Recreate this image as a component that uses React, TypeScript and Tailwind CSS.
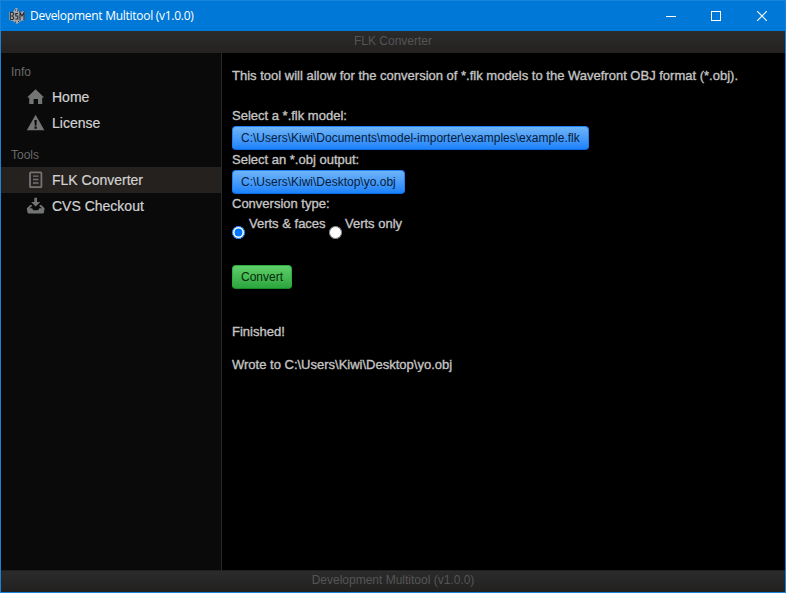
import React from "react";

type NavItem = { label: string; icon: React.ReactNode; active?: boolean };

const HomeIcon = () => (
  <svg viewBox="0 0 18 18" className="h-[18px] w-[18px]" fill="currentColor">
    <path d="M8.6 1.2 L17.2 9.6 H15.2 V16 H11 V11 H6.6 V16 H2.2 V9.6 H0 Z" />
  </svg>
);

const WarningIcon = () => (
  <svg viewBox="0 0 18 18" className="h-[18px] w-[18px]" fill="currentColor">
    <path fillRule="evenodd" d="M8.6 .8 L17.4 16.3 H-.2 Z M7.4 6 L7.8 11.8 H9.4 L9.8 6 Z M7.5 12.6 V14.7 H9.7 V12.6 Z" />
  </svg>
);

const DocumentIcon = () => (
  <svg viewBox="0 0 18 18" className="h-[18px] w-[18px]" fill="none" stroke="currentColor">
    <rect x="3" y="1.4" width="11.4" height="14.8" rx="0.8" strokeWidth="1.8" />
    <path d="M6 5.2 H11.5 M6 8.5 H11.5 M6 12 H11.5" strokeWidth="1.3" />
  </svg>
);

const InstallIcon = () => (
  <svg viewBox="0 0 18 18" className="h-[18px] w-[18px]" fill="currentColor">
    <path d="M7.3 .8 H10 V5 H13.2 L8.7 9.4 L4.2 5 H7.3 Z" />
    <path d="M3.2 8 H4.6 L5.2 8.8 L2.6 11.2 H5.1 L6.3 13.2 H11.1 L12.3 11.2 H14.8 L12.2 8.8 L12.8 8 H14.2 L17.6 11.3 L17 15.3 Q16.8 16.4 16 16.4 H1.5 Q.7 16.4 .4 15.3 L-.2 11.3 Z" />
  </svg>
);

const AppIcon = () => (
  <svg viewBox="0 0 18 18" className="h-[18px] w-[18px]">
    <path d="M7.5 1 H9.5 V3 L12 5 L16.5 4 V13 L13 14 L9 17 L5 14 L1 13 V5 L5 5 Z" fill="#a1a7ac" />
    <path d="M2.3 5.5 V12.5 M2 5.5 H5 L5.8 7 L4.5 9 L5.8 11 L5 12.5 H2 M3 9 H4.5 M10 6.5 H7.8 V9 H9.8 V12 H7.3 M12 13.5 V5.5 L14 9 L16 5.5 V13 M7 3 H8 M9 4 H10 M7 15 H8 M10 14.5 H11" fill="none" stroke="#292b2e" strokeWidth="1.1" />
  </svg>
);

const groups: { title: string; items: NavItem[] }[] = [
  { title: "Info", items: [{ label: "Home", icon: <HomeIcon /> }, { label: "License", icon: <WarningIcon /> }] },
  { title: "Tools", items: [{ label: "FLK Converter", icon: <DocumentIcon />, active: true }, { label: "CVS Checkout", icon: <InstallIcon /> }] },
];

const fileButton =
  "flex h-6 items-center whitespace-nowrap rounded-[4px] border border-[#2080f8] border-b-[#0f68e4] bg-gradient-to-b from-[#6eb4f7] to-[#1a82fb] pl-2 text-[12px] text-[#061c38]";

export default function App() {
  return (
    <div className="flex h-[593px] w-[786px] flex-col overflow-hidden border border-[#1883d7] bg-black font-['Liberation_Sans',Arial,sans-serif] text-[13px] text-[#c4c4c4]">
      <header className="flex h-[30px] shrink-0 items-center bg-[#0078d7] text-white">
        <div className="ml-[7px]"><AppIcon /></div>
        <h1 className="ml-1 whitespace-nowrap font-['Open_Sans',sans-serif] text-[12px] tracking-[-0.27px]">Development Multitool (v1.0.0)</h1>
        <div className="ml-auto flex h-full">
          <button className="flex w-[45px] items-center justify-center" aria-label="Minimize">
            <svg className="h-[10px] w-[10px]" viewBox="0 0 10 10"><path d="M0 5.5H10" stroke="white" /></svg>
          </button>
          <button className="flex w-[45px] items-center justify-center" aria-label="Maximize">
            <svg className="h-[10px] w-[10px]" viewBox="0 0 10 10"><rect x=".5" y=".5" width="9" height="9" fill="none" stroke="white" /></svg>
          </button>
          <button className="flex w-[47px] items-center justify-center" aria-label="Close">
            <svg className="h-[10px] w-[10px]" viewBox="0 0 10 10"><path d="M0 0L10 10M10 0L0 10" stroke="white" strokeWidth="1.2" /></svg>
          </button>
        </div>
      </header>
      <div className="h-[22px] shrink-0 bg-gradient-to-b from-[#2b2b2c] to-[#252220] text-center text-[12px] leading-[20px] text-[#555]">FLK Converter</div>
      <div className="flex min-h-0 flex-1">
        <nav className="w-[221px] shrink-0 border-r border-[#292929] bg-[#0a0a0a] pt-[10px]">
          {groups.map((g) => (
            <section key={g.title} className="mb-[10px]">
              <h2 className="h-[21px] pl-[10px] text-[12px] leading-[19px] text-[#696969]">{g.title}</h2>
              {g.items.map((item) => (
                <div key={item.label} className={item.active ? "flex h-[26px] items-center bg-[#25211e] pl-[26px]" : "flex h-[26px] items-center pl-[26px]"}>
                  <span className="text-[#737475] [&>svg]:overflow-visible">{item.icon}</span>
                  <span className="ml-[7px] text-[14px] text-[#d2d2d2] [-webkit-text-stroke:0.2px_#d2d2d2]">{item.label}</span>
                </div>
              ))}
            </section>
          ))}
        </nav>
        <main className="flex flex-1 flex-col items-start bg-black pl-[10px] pt-[13px] leading-5 [-webkit-text-stroke:0.35px_#c4c4c4]">
          <p className="h-10">This tool will allow for the conversion of *.flk models to the Wavefront OBJ format (*.obj).</p>
          <p className="h-5">Select a *.flk model:</p>
          <button className={fileButton + " w-[357px] [-webkit-text-stroke:0]"}>C:\Users\Kiwi\Documents\model-importer\examples\example.flk</button>
          <p className="h-5">Select an *.obj output:</p>
          <button className={fileButton + " w-[173px] [-webkit-text-stroke:0]"}>C:\Users\Kiwi\Desktop\yo.obj</button>
          <p className="h-5">Conversion type:</p>
          <div className="flex h-[51px]">
            <input type="radio" name="kind" defaultChecked className="mt-[12px] h-[13px] w-[13px] accent-[#0075ff]" />
            <label className="ml-1 w-[76px] whitespace-nowrap">Verts &amp; faces</label>
            <input type="radio" name="kind" className="ml-1 mt-[12px] h-[13px] w-[13px]" />
            <label className="ml-[3px] whitespace-nowrap">Verts only</label>
          </div>
          <button className="flex h-6 w-[60px] items-center rounded-[4px] border border-[#2caf42] border-b-[#198b2b] bg-gradient-to-b from-[#5fcf69] to-[#2ba63e] pl-2 text-[12px] text-[#062a0b] [-webkit-text-stroke:0]">Convert</button>
          <p className="mt-[33px]">Finished!</p>
          <p className="mt-[13px]">Wrote to C:\Users\Kiwi\Desktop\yo.obj</p>
        </main>
      </div>
      <footer className="h-[22px] shrink-0 border-t border-[#202020] bg-gradient-to-b from-[#2b2b2c] to-[#222120] text-center text-[12px] leading-[18px] text-[#555]">Development Multitool (v1.0.0)</footer>
    </div>
  );
}
